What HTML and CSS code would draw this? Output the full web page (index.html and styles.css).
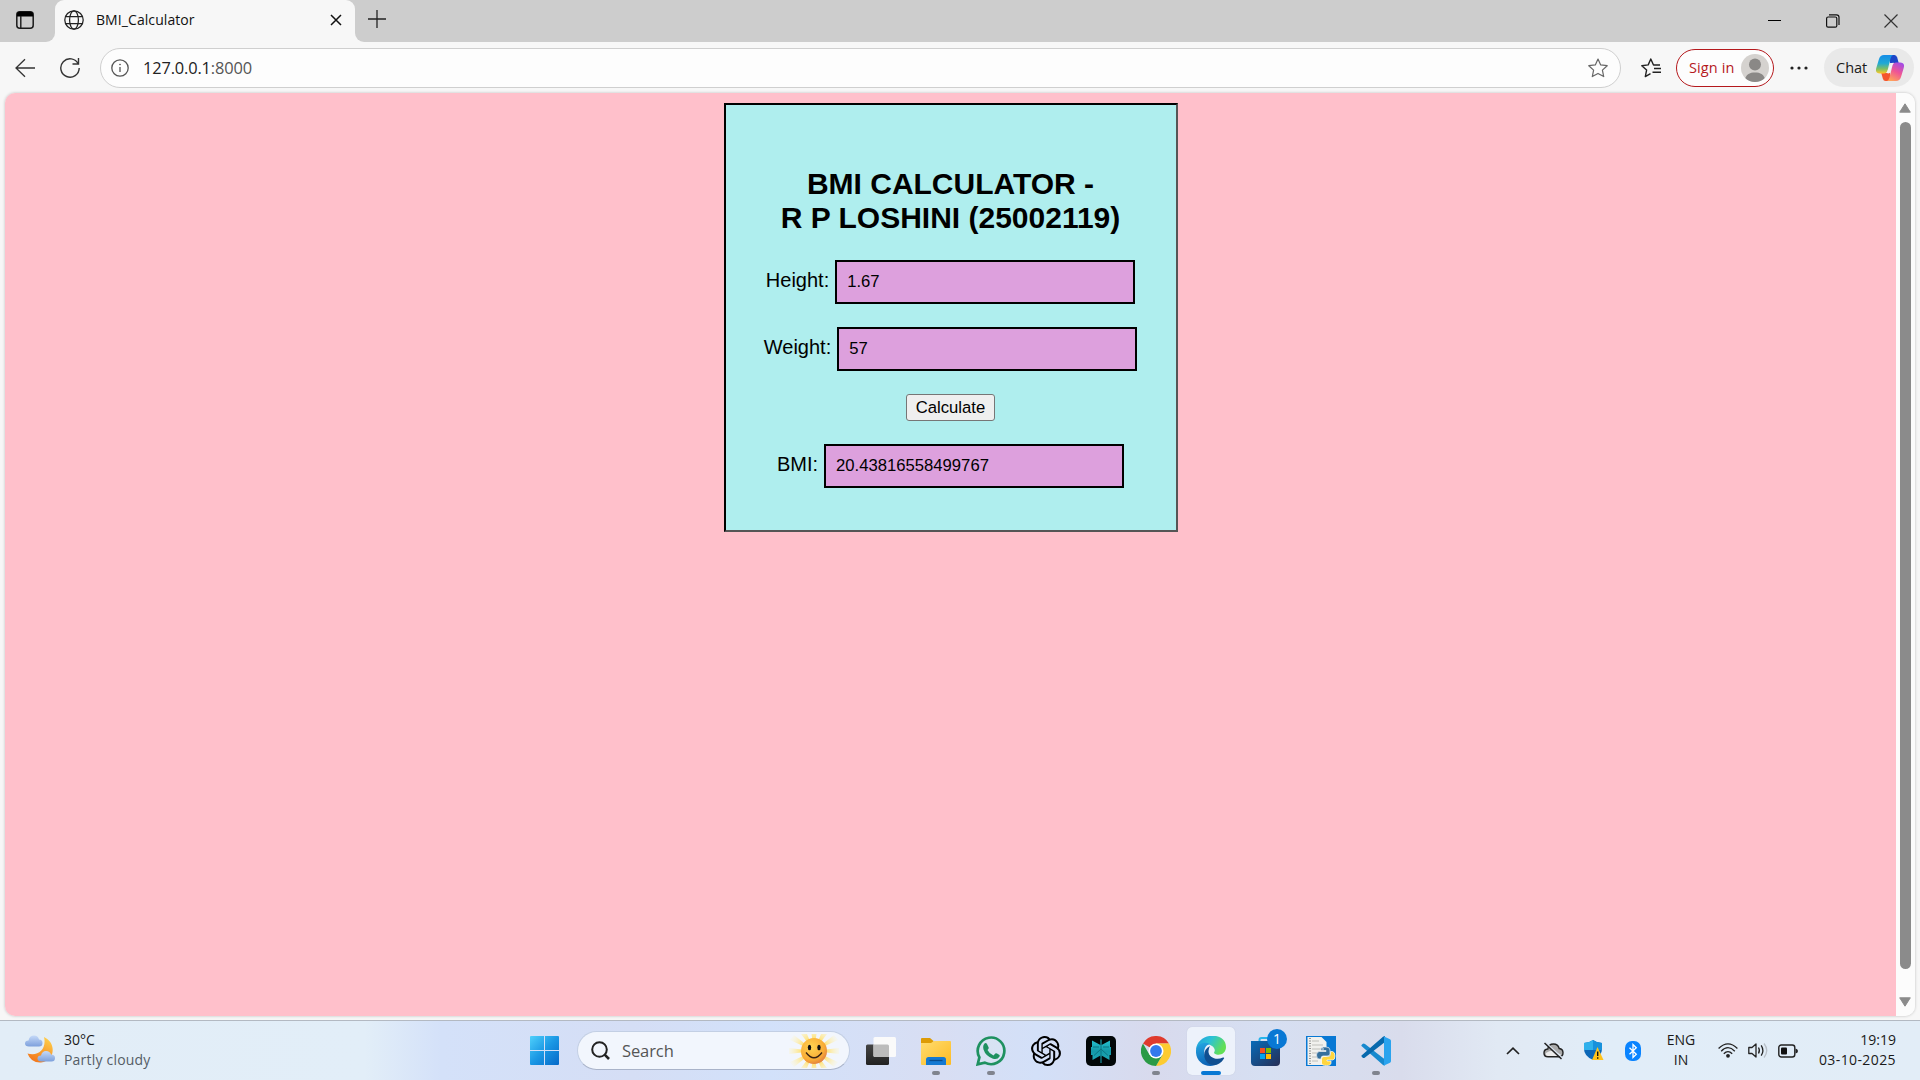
FILE: index.html
```html
<!DOCTYPE html>
<html lang="en">
<head>
<meta charset="utf-8">
<title>BMI_Calculator</title>
<link rel="stylesheet" href="styles.css">
</head>
<body>
<div class="screen">
  <header class="titlebar">
    <div class="strip strip-left">
      <svg class="ws-icon" width="18" height="18" viewBox="0 0 18 18"><rect x=".8" y=".8" width="16.4" height="16.4" rx="3" fill="none" stroke="#1b1b1b" stroke-width="1.5"/><path d="M1 5.5V3.5Q1 .8 3.700.8H14.300Q17 .8 17 3.500V5.500Z" fill="#000"/><path d="M4.800 5V17" stroke="#1b1b1b" stroke-width="1.400"/></svg>
    </div>
    <div class="tab-slot">
      <div class="tab">
        <svg width="20" height="20" viewBox="0 0 20 20" fill="none" stroke="#222" stroke-width="1.250"><circle cx="10" cy="10" r="9.200"/><ellipse cx="10" cy="10" rx="4.400" ry="9.200"/><path d="M1.700 6.500H18.300M1.700 13.500H18.300"/></svg>
        <span class="tab-title">BMI_Calculator</span>
        <svg class="tab-close" width="12" height="12" viewBox="0 0 12 12" stroke="#111" stroke-width="1.500"><path d="M1 1L11 11M11 1L1 11"/></svg>
      </div>
    </div>
    <div class="strip strip-right">
      <svg class="new-tab" width="18" height="18" viewBox="0 0 18 18" stroke="#222" stroke-width="1.300"><path d="M9 0V18M0 9H18"/></svg>
      <div class="win-controls">
        <svg width="14" height="14" viewBox="0 0 14 14" stroke="#000"><path d="M0 6.500H13"/></svg>
        <svg width="14" height="14" viewBox="0 0 14 14" fill="none" stroke="#111" stroke-width="1.200"><rect x=".6" y="3" width="10.200" height="10.200" rx="1.500"/><path d="M3 .8H10.500Q13 .8 13 3.300V11"/></svg>
        <svg width="14" height="14" viewBox="0 0 14 14" stroke="#333" stroke-width="1.200"><path d="M.5 .5L13.500 13.500M13.500 .5L.5 13.500"/></svg>
      </div>
    </div>
  </header>

  <nav class="toolbar">
    <svg class="back" width="20" height="20" viewBox="0 0 20 20" fill="none" stroke="#333" stroke-width="1.300"><path d="M20 10H1M10 1.200L1 10L10 18.800"/></svg>
    <svg class="reload" width="20" height="20" viewBox="0 0 20 20" fill="none" stroke="#333" stroke-width="1.400"><path d="M18.300 6A9.200 9.200 0 1 0 19.200 10M18.500 0V6H12.500"/></svg>
    <div class="address">
      <svg width="18" height="18" viewBox="0 0 18 18" fill="none" stroke="#555" stroke-width="1.300"><circle cx="9" cy="9" r="8.200"/><path d="M9 8V13"/><circle cx="9" cy="5.500" r=".5" fill="#555" stroke-width=".8"/></svg>
      <span class="url">127.0.0.1<span class="port">:8000</span></span>
      <svg class="star" width="20" height="20" viewBox="0 0 20 20" fill="none" stroke="#666" stroke-width="1.200" stroke-linejoin="round"><path d="M10 1L12.700 6.900L19.200 7.700L14.400 12.100L15.700 18.600L10 15.400L4.300 18.600L5.600 12.100L.8 7.700L7.300 6.900Z"/></svg>
    </div>
    <svg class="favs" width="20" height="20" viewBox="0 0 20 20" fill="none" stroke="#222" stroke-width="1.400" stroke-linejoin="round"><path d="M19 7H12.500L9.800 1L7.200 6.900L.8 7.700L5.600 12.100L4.300 18.600L9.500 15.600M13 10.500H20M11.500 14.300H20"/></svg>
    <div class="signin">
      <span>Sign in</span>
      <svg width="28" height="28" viewBox="0 0 28 28"><defs><clipPath id="av"><circle cx="14" cy="14" r="14"/></clipPath></defs><g clip-path="url(#av)"><rect width="28" height="28" fill="#d5d2cf"/><circle cx="14" cy="10.500" r="6" fill="#8a8886"/><path d="M3.500 28C4 20 9 18.500 14 18.500S24 20 24.500 28Z" fill="#8a8886"/></g></svg>
    </div>
    <svg class="dots" width="18" height="4" viewBox="0 0 18 4" fill="#222"><circle cx="2" cy="2" r="1.600"/><circle cx="9" cy="2" r="1.600"/><circle cx="16" cy="2" r="1.600"/></svg>
    <div class="chat">
      <span>Chat</span>
      <svg width="28" height="26" viewBox="0 0 28 26"><defs>
        <linearGradient id="cp1" x1="0" y1="0" x2="0" y2="1"><stop offset="0" stop-color="#168de8"/><stop offset=".45" stop-color="#20a9d5"/><stop offset=".75" stop-color="#7fbf63"/><stop offset="1" stop-color="#ffc928"/></linearGradient>
        <linearGradient id="cp2" x1=".8" y1="0" x2=".3" y2="1"><stop offset="0" stop-color="#a04be8"/><stop offset=".5" stop-color="#ef5595"/><stop offset="1" stop-color="#ffa25b"/></linearGradient></defs>
        <path d="M13 0H18.500Q20.500 0 21.200 2.500L22.700 8H14Z" fill="#1c45c8"/>
        <path d="M15 26H9.500Q7.500 26 6.800 23.500L5.300 18H14Z" fill="#f4562f"/>
        <path d="M8 0H17Q15.200.8 14.500 3.500L11.500 15.500Q10.700 18.500 8 18.500H4Q-1.200 18.500.3 13L3 4Q4.200 0 8 0Z" fill="url(#cp1)"/>
        <path d="M15 8.500L17.500 7.500L13 18.500L10.500 18Z" fill="#f4f2f4"/>
        <path d="M20 26H11Q12.800 25.200 13.500 22.500L16.500 10.500Q17.300 7.500 20 7.500H24Q29.200 7.500 27.700 13L25 22Q23.800 26 20 26Z" fill="url(#cp2)"/></svg>
    </div>
  </nav>

  <div class="viewport">
    <main class="page">
      <form class="card">
        <h1>BMI CALCULATOR -<br>R P LOSHINI (25002119)</h1>
        <div class="field"><label for="h">Height:</label><input id="h" type="text" value="1.67"></div>
        <div class="field"><label for="w">Weight:</label><input id="w" type="text" value="57"></div>
        <button type="button">Calculate</button>
        <div class="field"><label for="b">BMI:</label><input id="b" type="text" value="20.43816558499767"></div>
      </form>
    </main>
    <div class="scrollbar">
      <svg width="12" height="10" viewBox="0 0 12 10"><path d="M6 .8L11.300 9.200H.7Z" fill="#8b8b8b" stroke="#8b8b8b" stroke-linejoin="round"/></svg>
      <div class="thumb"></div>
      <svg width="12" height="10" viewBox="0 0 12 10"><path d="M6 9.200L11.300 .8H.7Z" fill="#8b8b8b" stroke="#8b8b8b" stroke-linejoin="round"/></svg>
    </div>
  </div>

  <footer class="taskbar">
    <div class="weather">
      <svg class="weather-icon" width="30" height="28" viewBox="0 0 30 28"><defs><linearGradient id="mo" x1=".8" y1="0" x2=".3" y2="1"><stop offset="0" stop-color="#ffd04a"/><stop offset="1" stop-color="#f2761c"/></linearGradient><linearGradient id="cl" x1="0" y1="0" x2="0" y2="1"><stop offset="0" stop-color="#c5d9f8"/><stop offset="1" stop-color="#7da0dc"/></linearGradient></defs>
        <path d="M19 2C32 8 30 26 16 27.500Q6 28 2.500 18.500C13 22 22 14 19 2Z" fill="url(#mo)"/>
        <path d="M4 11.500Q0 11.500 0 8.500Q0 5.500 3.500 5.500Q4.500 .5 9 .5Q13 .5 14 4.500Q17.500 4.500 17.500 8Q17.500 11.500 14 11.500Z" fill="url(#cl)"/>
        <path d="M16.500 26.500Q12.500 26.500 12.500 23.500Q12.500 20.500 16 20.500Q17 16 21 16Q25 16 26 19.500Q30 19.500 30 23Q30 26.500 26.500 26.500Z" fill="url(#cl)"/></svg>
      <div class="weather-text"><span class="temp">30°C</span><span class="cond">Partly cloudy</span></div>
    </div>

    <div class="dock">
      <svg class="start" width="29" height="29" viewBox="0 0 29 29"><defs><linearGradient id="wn" x1="0" y1="0" x2="1" y2="1"><stop offset="0" stop-color="#4fd0fb"/><stop offset=".5" stop-color="#1a97e4"/><stop offset="1" stop-color="#0669c8"/></linearGradient></defs><path d="M1 0H14V14H0V1Q0 0 1 0ZM15 0H28Q29 0 29 1V14H15ZM0 15H14V29H1Q0 29 0 28ZM15 15H29V28Q29 29 28 29H15Z" fill="url(#wn)"/></svg>
      <div class="search">
        <svg width="20" height="20" viewBox="0 0 20 20" fill="none" stroke="#222" stroke-width="2"><circle cx="8.500" cy="8.500" r="7.300"/><path d="M13.700 13.700L18 18" stroke-width="2.600"/></svg>
        <span>Search</span>
        <svg class="sun" width="50" height="34" viewBox="0 0 50 34"><defs><radialGradient id="sg" cx=".4" cy=".35" r=".7"><stop offset="0" stop-color="#ffd452"/><stop offset=".7" stop-color="#f9ac36"/><stop offset="1" stop-color="#df7b42"/></radialGradient><radialGradient id="ray" gradientUnits="userSpaceOnUse" cx="25" cy="17" r="25"><stop offset=".5" stop-color="#ffe277"/><stop offset="1" stop-color="#fff3b8" stop-opacity=".2"/></radialGradient></defs>
          <path fill="url(#ray)" d="M25 17L22.500 0H27.500ZM25 17L12 0H18ZM25 17L32 0H38ZM25 17L1 6L5 1ZM25 17L49 6L45 1ZM25 17L0 20V14ZM25 17L50 14V20ZM25 17L1 28L5 33ZM25 17L49 28L45 33ZM25 17L12 34H18ZM25 17L32 34H38ZM25 17L22.500 34H27.500Z"/>
          <circle cx="25" cy="17" r="13" fill="url(#sg)"/><ellipse cx="20.500" cy="13.500" rx="1.700" ry="2.700" fill="#111"/><ellipse cx="30" cy="13.500" rx="1.700" ry="2.700" fill="#111"/><path d="M17 18.500Q25 29 33 18.500" fill="none" stroke="#3b2414" stroke-width="1.300"/></svg>
      </div>
      <div class="apps">
        <div class="app"><svg width="30" height="30" viewBox="0 0 30 30"><defs><linearGradient id="tv" x1="0" y1="0" x2="0" y2="1"><stop offset="0" stop-color="#444"/><stop offset="1" stop-color="#222"/></linearGradient></defs><rect x="0" y="8.500" width="23" height="20.500" rx="1.500" fill="url(#tv)"/><rect x="7.500" y="1" width="22.500" height="20" rx="1.500" fill="#fafafa"/><path d="M7.500 8.500H21.500Q23 8.500 23 10V21H9Q7.500 21 7.500 19.500Z" fill="#bcbcbc"/></svg></div>
        <div class="app running"><svg width="30" height="30" viewBox="0 0 30 30"><defs><linearGradient id="fo" x1="0" y1="0" x2="1" y2="1"><stop offset="0" stop-color="#ffdc70"/><stop offset="1" stop-color="#fdbb23"/></linearGradient></defs><path d="M0 3Q0 2 1 2H9L12.500 5V8H0Z" fill="#dd9b06"/><path d="M0 7H10L13 5H29Q30 5 30 6V28Q30 29 29 29H1Q0 29 0 28Z" fill="url(#fo)"/><path d="M5 29V23.500Q5 21 7.500 21H22.500Q25 21 25 23.500V29Z" fill="#1479d2"/><path d="M8.500 24.500H21.500" stroke="#084c8d" stroke-width="1.300"/></svg></div>
        <div class="app running"><svg width="30" height="30" viewBox="0 0 30 30"><path d="M1.700 28.300L3.400 21.300A13.300 13.300 0 1 1 8.800 26.600Z" fill="#dcebf0" fill-opacity=".35" stroke="#1e9160" stroke-width="2.700"/><path d="M8.500 7.500Q10 6.500 11 8L12.700 11.500Q13 12.500 11.500 14Q13.500 18 17.500 19.500L19.300 17.500Q20 17 21 17.500L23.500 19Q24 19.500 23.500 20.500Q21.500 24 17 22.700Q9.500 20 7.500 13.500Q6.500 9.500 8.500 7.500Z" fill="#1e9160"/></svg></div>
        <div class="app"><svg width="30" height="30" viewBox="0 0 24 24"><path d="M22.2819 9.8211a5.9847 5.9847 0 0 0-.5157-4.9108 6.0462 6.0462 0 0 0-6.5098-2.9A6.0651 6.0651 0 0 0 4.9807 4.1818a5.9847 5.9847 0 0 0-3.9977 2.9 6.0462 6.0462 0 0 0 .7427 7.0966 5.98 5.98 0 0 0 .511 4.9107 6.051 6.051 0 0 0 6.5146 2.9001A5.9847 5.9847 0 0 0 13.2599 24a6.0557 6.0557 0 0 0 5.7718-4.2058 5.9894 5.9894 0 0 0 3.9977-2.9001 6.0557 6.0557 0 0 0-.7475-7.0729zm-9.022 12.6081a4.4755 4.4755 0 0 1-2.8764-1.0408l.1419-.0804 4.7783-2.7582a.7948.7948 0 0 0 .3927-.6813v-6.7369l2.02 1.1686a.071.071 0 0 1 .038.052v5.5826a4.504 4.504 0 0 1-4.4945 4.4944zm-9.6607-4.1254a4.4708 4.4708 0 0 1-.5346-3.0137l.142.0852 4.783 2.7582a.7712.7712 0 0 0 .7806 0l5.8428-3.3685v2.3324a.0804.0804 0 0 1-.0332.0615L9.74 19.9502a4.4992 4.4992 0 0 1-6.1408-1.6464zM2.3408 7.8956a4.485 4.485 0 0 1 2.3655-1.9728V11.6a.7664.7664 0 0 0 .3879.6765l5.8144 3.3543-2.0201 1.1685a.0757.0757 0 0 1-.071 0l-4.8303-2.7865A4.504 4.504 0 0 1 2.3408 7.872zm16.5963 3.8558L13.1038 8.364 15.1192 7.2a.0757.0757 0 0 1 .071 0l4.8303 2.7913a4.4944 4.4944 0 0 1-.6765 8.1042v-5.6772a.79.79 0 0 0-.407-.667zm2.0107-3.0231l-.142-.0852-4.7735-2.7818a.7759.7759 0 0 0-.7854 0L9.409 9.2297V6.8974a.0662.0662 0 0 1 .0284-.0615l4.8303-2.7866a4.4992 4.4992 0 0 1 6.6802 4.66zM8.3065 12.863l-2.02-1.1638a.0804.0804 0 0 1-.038-.0567V6.0742a4.4992 4.4992 0 0 1 7.3757-3.4537l-.142.0805L8.704 5.459a.7948.7948 0 0 0-.3927.6813zm1.0976-2.3654l2.602-1.4998 2.6069 1.4998v2.9994l-2.5974 1.4997-2.6067-1.4997Z"/></svg></div>
        <div class="app"><svg width="30" height="30" viewBox="0 0 30 30"><defs><linearGradient id="px" x1="0" y1="0" x2="0" y2="1"><stop offset="0" stop-color="#27c4d2"/><stop offset=".5" stop-color="#1499a8"/><stop offset="1" stop-color="#20adbb"/></linearGradient></defs><rect width="30" height="30" rx="5" fill="#020708"/><path d="M6 4.500L14.500 9V3.500H15.500V9L24 4.500V11H25V19H23.500V24L15.500 19.500V27H14.500V19.500L6.500 24V19H5V11H6Z" fill="url(#px)"/><path d="M15 9V21M15 13L8 19.500M15 13L22 19.500M7 11H13M17 11H23" stroke="#0b7482" stroke-width="1"/></svg></div>
        <div class="app running"><svg width="30" height="30" viewBox="0 0 30 30"><path d="M15 15L2 7.500A15 15 0 0 1 28 7.500H15Z" fill="#df3a2d"/><path d="M15 15V7.500H28A15 15 0 0 1 15 30L21.500 18.700Z" fill="#fdcb30"/><path d="M15 15L21.500 18.750L15 30A15 15 0 0 1 2 7.500L8.500 18.750Z" fill="#2a9a46"/><circle cx="15" cy="15" r="7.500" fill="#fff"/><circle cx="15" cy="15" r="5.900" fill="#3279ec"/></svg></div>
        <div class="app active"><svg width="30" height="30" viewBox="0 0 30 30"><defs><linearGradient id="e1" x1="0" y1="0" x2="1" y2=".4"><stop offset="0" stop-color="#219be0"/><stop offset=".5" stop-color="#2cc2d5"/><stop offset="1" stop-color="#62df55"/></linearGradient><linearGradient id="e2" x1="0" y1="0" x2=".3" y2="1"><stop offset="0" stop-color="#25a8e3"/><stop offset="1" stop-color="#0c62b5"/></linearGradient></defs>
          <path d="M0 14C1-4 30-5 30 11C30 17 25 19.500 20.500 18.500Q17 18 18.500 15.500C20 12 15 8 10 8Q3 8 0 14Z" fill="url(#e1)"/><path d="M0 14C1.500 7 9 5.500 14 8C9 9 7 15 9 20C11 27 19 30 23 27.500C12 34-1 27 0 14Z" fill="url(#e2)"/><path d="M14 10C8 13 7 19 9.500 24C13 31 23 31 28 22.500Q28.500 21 27 21.500C20 25 12 21 12.500 15Q12.700 12 14 10Z" fill="#104f91"/></svg></div>
        <div class="app store"><svg width="30" height="30" viewBox="0 0 30 30"><defs><linearGradient id="st" x1="0" y1="0" x2="1" y2="1"><stop offset="0" stop-color="#076bb9"/><stop offset="1" stop-color="#272e55"/></linearGradient></defs><path d="M8.500 6V4Q8.500 2 10.500 2H19" fill="none" stroke="#27b4ea" stroke-width="2"/><path d="M0 5H29V26Q29 30 25 30H4Q0 30 0 26Z" fill="url(#st)"/><path d="M9 12H14V17H9Z" fill="#f25022"/><path d="M15 12H20V17H15Z" fill="#7fba00"/><path d="M9 18H14V23H9Z" fill="#00a4ef"/><path d="M15 18H20V23H15Z" fill="#ffb900"/></svg><span class="badge">1</span></div>
        <div class="app"><svg width="30" height="30" viewBox="0 0 30 30"><path d="M0 0H30V30H0Z" fill="#0878d4"/><path d="M1.500 1H15.500L20.500 6V29H1.500Z" fill="#f1f1ee"/><path d="M4 2V28" stroke="#777" stroke-width="1.500" stroke-dasharray="1 1.500"/><path d="M6 5H13M6 9H17M6 13H16M6 17H11M6 21H11M6 25H12" stroke="#d0d0cc" stroke-width="1.500"/><path d="M15 11H20Q24 11 24 14V18Q24 20 21 20H17Q15 20 15 23H13Q10.500 23 10.500 19Q10.500 15.500 13.500 15.500H20V14.500H15V13Q15 11 17 11Z" fill="#36709d" stroke="#e9eef2" stroke-width=".7"/><path d="M24.500 15.500H26.500Q29 16 29 20Q29 24 26.500 24H21V25H25V27Q25 29.500 20.500 29.500Q15.500 29.500 15.500 27V23Q15.500 20.500 18 20.500H22Q24.500 20.500 24.500 18Z" fill="#ffd53e" stroke="#fff" stroke-width=".7"/><circle cx="17" cy="13" r=".8" fill="#fff"/></svg></div>
        <div class="app running"><svg width="30" height="30" viewBox="0 0 30 30"><path d="M1.500 8Q2.500 7 4 8L24 23.500V29.500L22 29L.5 10Q0 9.500 .8 8.700Z" fill="#1789ce"/><path d="M1.500 21.500Q2.500 22.500 4 21.500L24 6V0L22 .8L.5 19.500Q0 20 .8 20.800Z" fill="#0769ad"/><path d="M22.500 .2L29 3.200Q30 3.700 30 5V25Q30 26.300 29 26.800L22.500 29.800Q23 29 23 28V2Q23 1 22.500 .2Z" fill="#2aa3ee"/></svg></div>
      </div>
    </div>

    <div class="tray">
      <svg class="chev" width="14" height="8" viewBox="0 0 14 8" fill="none" stroke="#222" stroke-width="1.700"><path d="M1 7L7 1.200L13 7"/></svg>
      <svg class="cloud" width="21" height="18" viewBox="0 0 21 18"><path d="M5 14.800Q1 14.800 1 11Q1 7.300 4.800 7Q5.500 2 10.500 2Q15 2 16.200 6.500Q20 7 20 10.800Q20 14.800 16 14.800Z" fill="#aaa" stroke="#222" stroke-width="1.400"/><path d="M5 14Q2 13 3 11Q9 7 12 10L18 12.500Q17 14 15 14Z" fill="#ececec"/><path d="M2.500 .5L19.500 16" stroke="#dbe5f2" stroke-width="1.500"/><path d="M1.500 1L18.500 17" stroke="#222" stroke-width="1.500"/></svg>
      <svg class="shield" width="20" height="21" viewBox="0 0 20 21"><path d="M9 0Q13 3 18 3V9Q18 16 9 20Q0 16 0 9V3Q5 3 9 0Z" fill="#0c67b7"/><path d="M9 0V10H0V3Q5 3 9 0Z" fill="#2fb1ec"/><path d="M9 0Q13 3 18 3V10H9Z" fill="#1791dc"/><path d="M13.500 7L19.500 20H8Z" fill="#ffc21a"/><path d="M13.700 11.500V16M13.700 17.300V18.800" stroke="#111" stroke-width="1.400"/></svg>
      <svg class="bt" width="16" height="20" viewBox="0 0 16 20"><rect width="16" height="20" rx="7" fill="#0a84ff"/><path d="M4.500 6.700L11.300 13.200L8 16.500V3.500L11.300 6.800L4.500 13.300" fill="none" stroke="#fff" stroke-width="1.300"/></svg>
      <div class="lang"><span>ENG</span><span>IN</span></div>
      <svg class="wifi" width="20" height="15" viewBox="0 0 20 15" fill="none" stroke="#222" stroke-width="1.300"><path d="M.6 5.500Q10-3.800 19.400 5.500M3.200 8.200Q10 1.200 16.800 8.200M5.800 10.800Q10 6.300 14.200 10.800"/><circle cx="10" cy="12.800" r="1.900" fill="#222" stroke="none"/></svg>
      <svg class="vol" width="20" height="17" viewBox="0 0 20 17" fill="none" stroke="#222" stroke-width="1.300"><path d="M.8 5.500H4L8 2V15L4 11.500H.8Z" stroke-linejoin="round"/><path d="M10.500 5.500Q12.300 8.500 10.500 11.500M13.200 3.300Q16.500 8.500 13.200 13.700"/><path d="M16 1.500Q21.500 8.500 16 15.500" stroke="#b9c0c8"/></svg>
      <svg class="bat" width="20" height="14" viewBox="0 0 20 14"><rect x=".8" y="1" width="16" height="12" rx="2.500" fill="none" stroke="#222" stroke-width="1.400"/><rect x="3" y="3.500" width="6" height="7" rx="1" fill="#111"/><path d="M17.500 4.500Q20 5 20 7T17.500 9.500Z" fill="#222"/></svg>
      <div class="clock"><span>19:19</span><span class="date">03-10-2025</span></div>
    </div>
  </footer>
</div>
</body>
</html>
```
FILE: styles.css
```css
* { box-sizing: border-box; }
body {
  margin: 0;
  font-family: "Open Sans", "Noto Sans", sans-serif;
  color: #1a1a1a;
}
svg { display: block; flex: none; }
.screen {
  width: 1920px;
  height: 1080px;
  overflow: hidden;
  display: flex;
  flex-direction: column;
  background: #f7f7f7;
}

/* Title bar */
.titlebar { display: flex; height: 42px; flex: none; }
.strip { background: #cdcdcd; display: flex; }
.strip-left { width: 55px; border-bottom-right-radius: 9px; padding: 11px 0 0 16px; }
.tab-slot { width: 300px; background: linear-gradient(#cdcdcd 16px, #f7f7f7 16px); }
.tab {
  height: 42px;
  display: flex;
  align-items: center;
  padding: 0 13px 3px 9px;
  background: #f7f7f7;
  border-radius: 9px 9px 0 0;
}
.tab-title { font-size: 14px; letter-spacing: .08px; margin-left: 12px; flex: 1; color: #111; }
.strip-right { flex: 1; border-bottom-left-radius: 9px; padding: 10px 22px 0 13px; justify-content: space-between; }
.win-controls { display: flex; gap: 44px; padding-top: 4px; }

/* Toolbar */
.toolbar {
  display: flex;
  align-items: center;
  height: 51px;
  flex: none;
  padding: 0 6px 0 15px;
  font-size: 14.5px;
}
.reload { margin-left: 25px; }
.address {
  display: flex;
  align-items: center;
  width: 1521px;
  height: 40px;
  margin-left: 20px;
  padding: 0 12px 0 10px;
  background: #fdfdfd;
  border: 1px solid #cfcfcf;
  border-radius: 20px;
}
.url { flex: 1; margin-left: 14px; font-size: 16.4px; letter-spacing: -.15px; color: #222; }
.port { color: #555; }
.favs { margin-left: 20px; }
.signin {
  display: flex;
  align-items: center;
  justify-content: space-between;
  width: 98px;
  height: 38px;
  margin-left: 15px;
  padding: 0 4px 0 12px;
  border: 1px solid #b5191d;
  border-radius: 19px;
  background: #fdfdfd;
  color: #b5191d;
  white-space: nowrap;
}
.signin span { letter-spacing: .1px; }
.dots { margin-left: 16px; }
.chat {
  display: flex;
  align-items: center;
  justify-content: space-between;
  width: 90px;
  height: 39px;
  margin-left: 16px;
  padding: 0 10px 0 12px;
  border-radius: 20px;
  background: #e9e9e9;
}

/* Page viewport */
.viewport {
  display: flex;
  height: 923px;
  flex: none;
  margin: 0 5px;
  border-radius: 10px;
  overflow: hidden;
  box-shadow: 0 0 3px #bbb;
}
.page { flex: 1; background: #ffc0cb; padding-top: 10px; font-family: "Liberation Sans", Arial, sans-serif; color: #000; }
.card {
  display: flex;
  flex-direction: column;
  align-items: center;
  width: 454px;
  height: 429px;
  margin: 0 auto;
  padding-top: 62px;
  border: 2px solid;
  border-color: #000 #555 #555 #000;
  background: #afeeee;
}
h1 { margin: 0 0 25px; font-size: 30px; line-height: 34px; text-align: center; }
.field { display: flex; align-items: baseline; gap: 6px; font-size: 20px; margin-bottom: 23px; }
.field input {
  width: 300px;
  height: 44px;
  padding: 0 10px;
  border: 2px solid #000;
  background: #dda0dd;
  font: 16.667px "Liberation Sans", Arial, sans-serif;
  color: #000;
}
.card button {
  width: 89px;
  height: 27px;
  padding: 0;
  margin-bottom: 23px;
  border: 1px solid #767676;
  border-radius: 3px;
  background: #efefef;
  font: 16.667px "Liberation Sans", Arial, sans-serif;
  color: #000;
}
.scrollbar {
  width: 19px;
  display: flex;
  flex-direction: column;
  align-items: center;
  justify-content: space-between;
  padding: 10px 1px 9px 0;
  background: #fcfcfc;
}
.thumb { width: 11px; height: 847px; border-radius: 6px; background: #8b8b8b; margin-bottom: 20px; }

/* Taskbar */
.taskbar {
  display: flex;
  align-items: center;
  height: 60px;
  margin-top: 4px;
  border-top: 1px solid #b3b9c2;
  background: linear-gradient(90deg, #e2edf7 0, #e2eef8 19%, #d4e1f9 23%, #d5def5 33%, #d2e1fa 40%, #d8def3 49%, #d3e0f8 54%, #d8daed 60%, #d6dff2 66%, #d9dcec 73%, #e1e9f4 78%, #e1edf8 84%, #e2edf7 100%);
  font-size: 14px;
}
.weather { display: flex; align-items: center; gap: 9px; width: 505px; padding-left: 25px; flex: none; }
.weather-icon { margin-bottom: 4px; }
.weather-text, .lang, .clock { display: flex; flex-direction: column; line-height: 20px; white-space: nowrap; padding-bottom: 2px; }
.cond { color: #555d66; letter-spacing: .2px; }
.dock { display: flex; align-items: center; flex: none; width: 898px; padding-left: 25px; }
.search {
  display: flex;
  align-items: center;
  width: 273px;
  height: 39px;
  margin-left: 18px;
  padding: 0 10px 0 13px;
  border: 1px solid #c3cfe4;
  border-bottom-color: #a9b3c9;
  border-radius: 20px;
  background: #f2f6fd;
  font-size: 16.5px;
  color: #555;
}
.search span { flex: 1; margin-left: 11px; letter-spacing: -.1px; }
.apps { display: flex; gap: 7px; margin-left: 7px; }
.app {
  position: relative;
  width: 48px;
  height: 48px;
  border-radius: 5px;
  display: flex;
  align-items: center;
  justify-content: center;
}
.active { background: #edf2fb; box-shadow: 0 0 1px #b4bdd0; }
.running::after, .active::after {
  content: "";
  position: absolute;
  bottom: 0;
  width: 8px;
  height: 4px;
  border-radius: 2px;
  background: #80848e;
}
.active::after { width: 20px; background: #0878d4; }
.badge {
  position: absolute;
  top: 2px;
  right: 3px;
  width: 20px;
  height: 20px;
  border-radius: 50%;
  background: #0878d4;
  color: #fff;
  font-size: 14px;
  line-height: 20px;
  text-align: center;
}
.tray { display: flex; align-items: center; flex: 1; padding: 0 24px 0 103px; }
.cloud { margin-left: 23px; }
.shield { margin-left: 20px; }
.bt { margin-left: 21px; }
.lang { width: 40px; margin-left: 20px; align-items: center; }
.wifi { margin-left: 17px; }
.vol, .bat { margin-left: 10px; }
.clock { flex: 1; align-items: flex-end; }
.date { letter-spacing: .4px; }
```
